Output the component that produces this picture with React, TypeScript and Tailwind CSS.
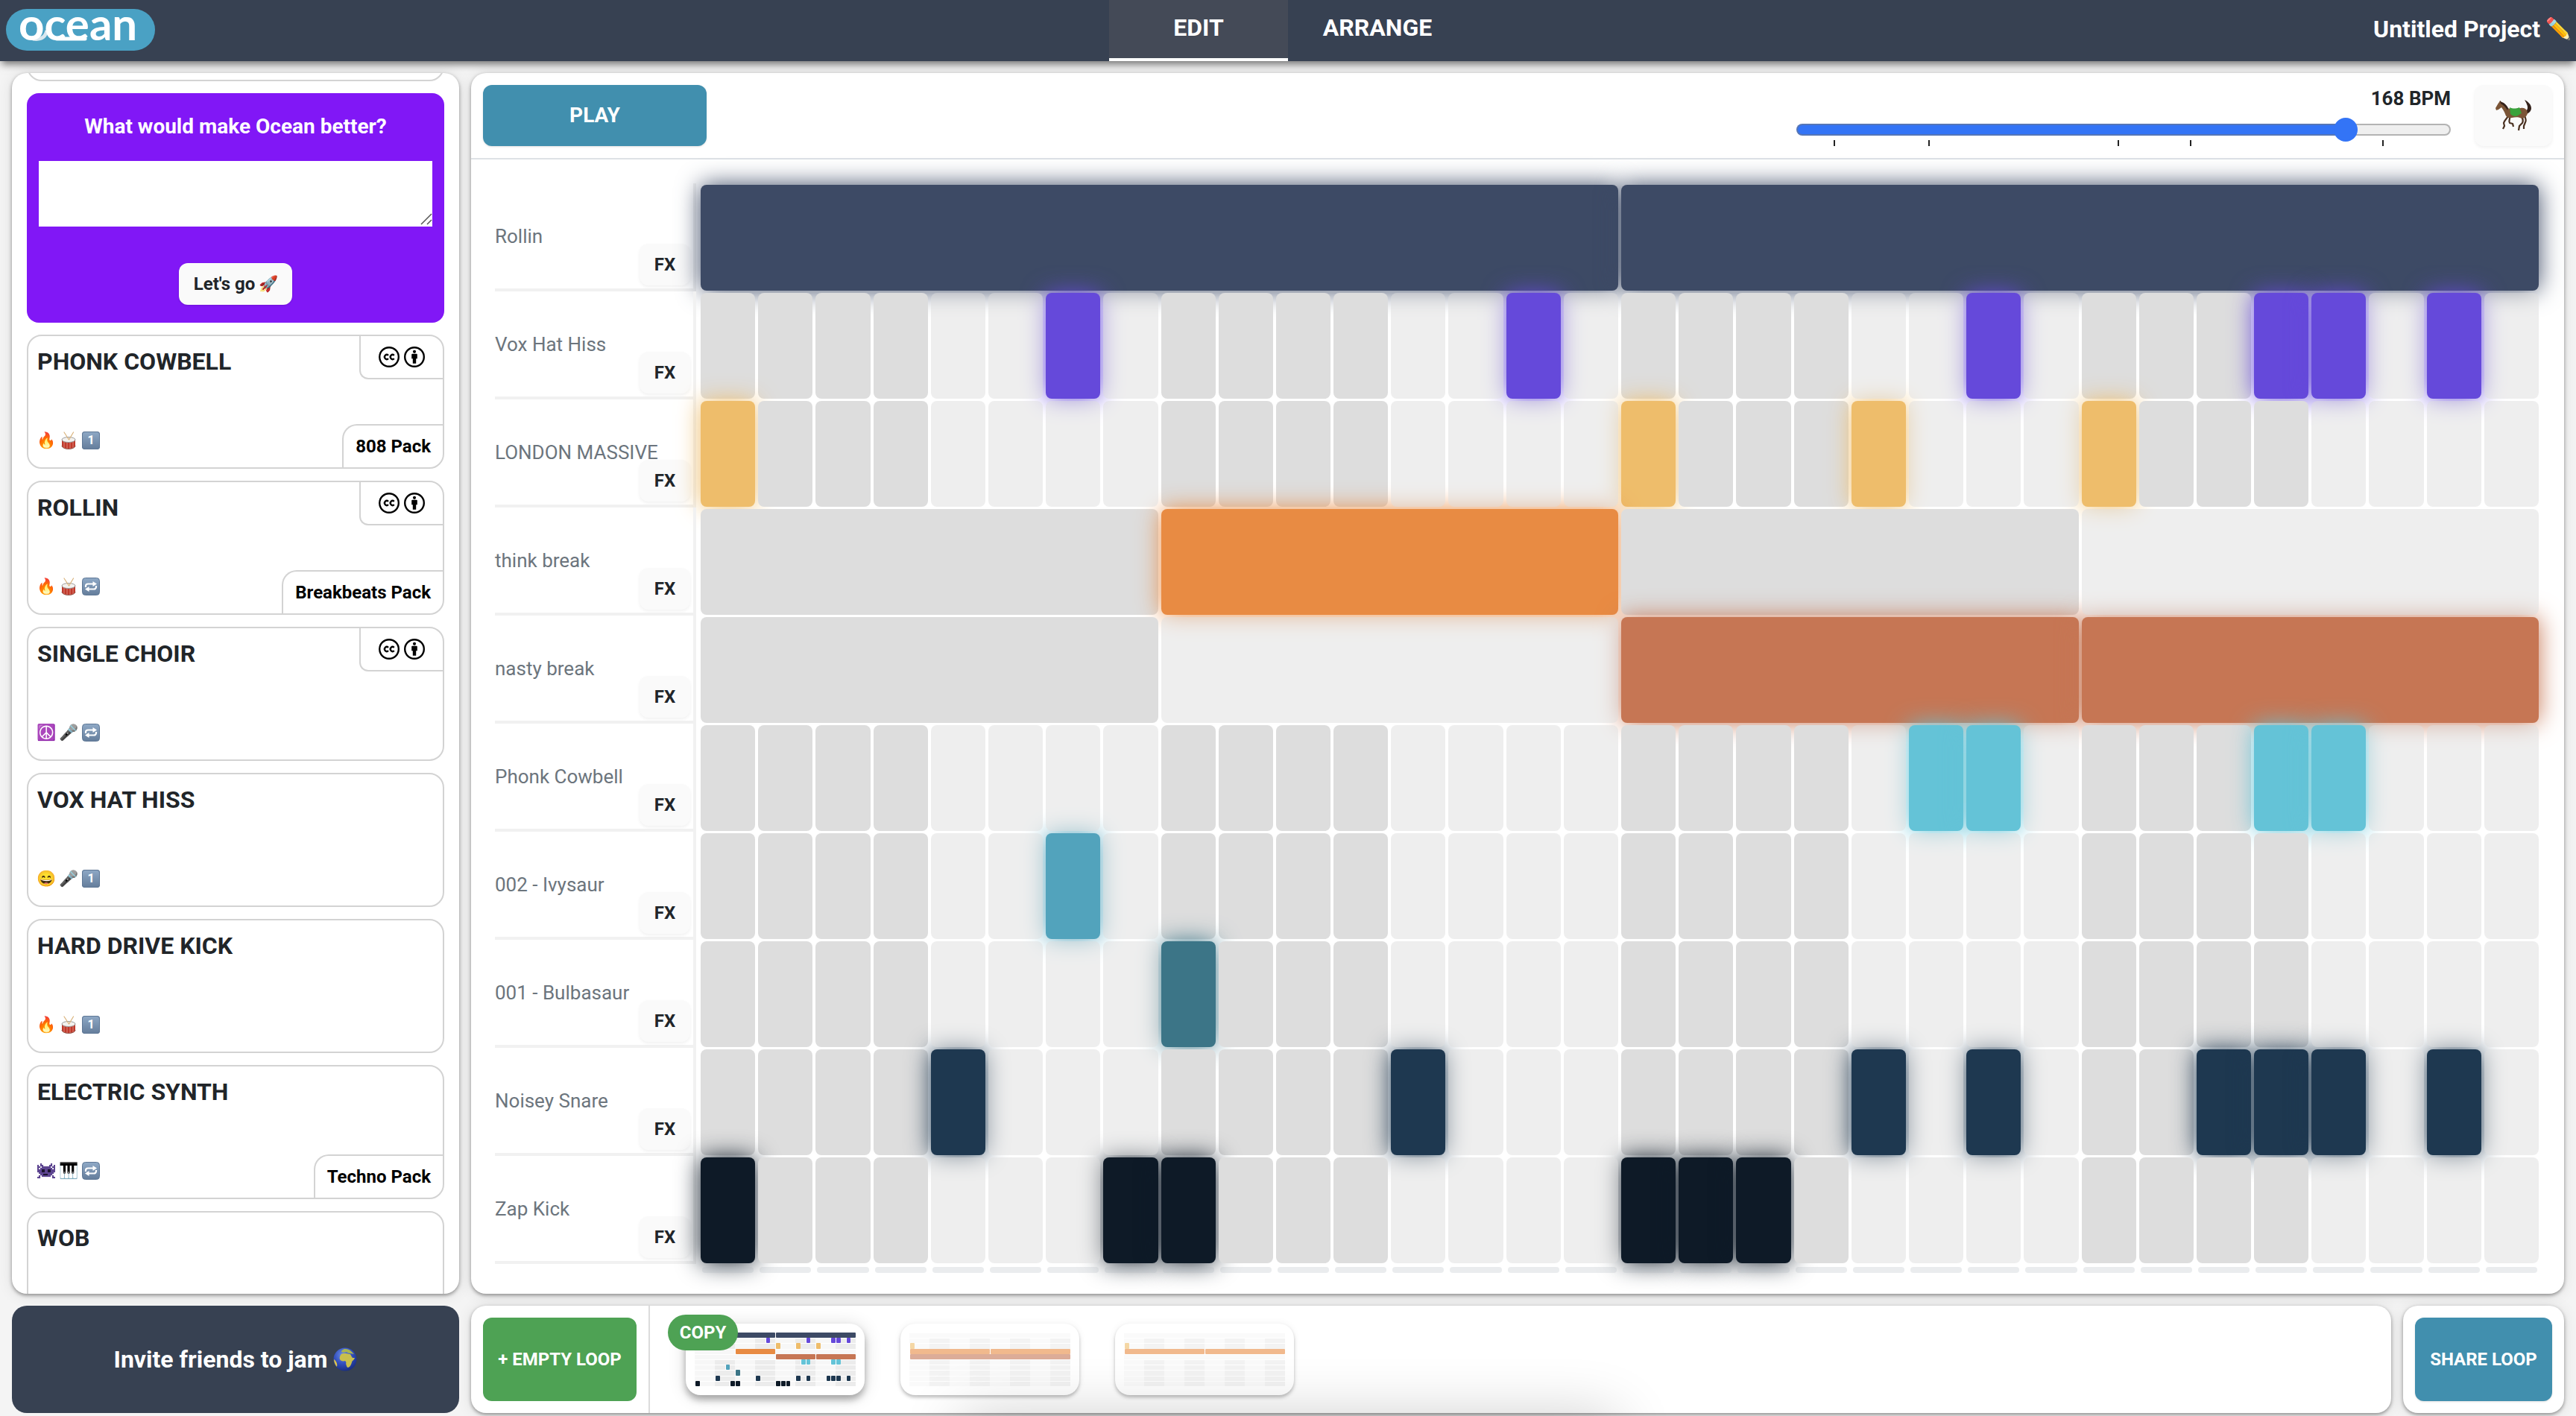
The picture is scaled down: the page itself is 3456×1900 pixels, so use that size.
import { useState, type ReactNode } from 'react';

type Segment = { span: number; on: boolean };
type Track = { name: string; fill: string; glow: string; segments: Segment[] };

const steps = (...active: number[]): Segment[] =>
  Array.from({ length: 32 }, (_, i) => ({ span: 1, on: active.includes(i) }));

const blocks = (span: number, pattern: string): Segment[] =>
  pattern.split('').map((c) => ({ span, on: c === 'x' }));

const TRACKS: Track[] = [
  { name: 'Rollin', fill: 'bg-[#3d4a65]', glow: 'shadow-[0_0_32px_#3d4a65]', segments: blocks(16, 'xx') },
  { name: 'Vox Hat Hiss', fill: 'bg-[#6549da]', glow: 'shadow-[0_0_32px_#6549da]', segments: steps(6, 14, 22, 27, 28, 30) },
  { name: 'LONDON MASSIVE', fill: 'bg-[#eebd6b]', glow: 'shadow-[0_0_32px_#eebd6b]', segments: steps(0, 16, 20, 24) },
  { name: 'think break', fill: 'bg-[#e88b43]', glow: 'shadow-[0_0_32px_#e88b43]', segments: blocks(8, '.x..') },
  { name: 'nasty break', fill: 'bg-[#c67654]', glow: 'shadow-[0_0_32px_#c67654]', segments: blocks(8, '..xx') },
  { name: 'Phonk Cowbell', fill: 'bg-[#64c3d7]', glow: 'shadow-[0_0_32px_#64c3d7]', segments: steps(21, 22, 27, 28) },
  { name: '002 - Ivysaur', fill: 'bg-[#52a3bc]', glow: 'shadow-[0_0_32px_#52a3bc]', segments: steps(6) },
  { name: '001 - Bulbasaur', fill: 'bg-[#3c7587]', glow: 'shadow-[0_0_32px_#3c7587]', segments: steps(8) },
  { name: 'Noisey Snare', fill: 'bg-[#1e3850]', glow: 'shadow-[0_0_32px_#1e3850]', segments: steps(4, 12, 20, 22, 26, 27, 28, 30) },
  { name: 'Zap Kick', fill: 'bg-[#0e1a27]', glow: 'shadow-[0_0_32px_#0e1a27]', segments: steps(0, 7, 8, 16, 17, 18) },
];

const LOOPS: Segment[][][] = [
  TRACKS.map((t) => t.segments),
  [blocks(8, '....'), steps(), steps(0), blocks(16, 'xx'), blocks(32, 'x'), steps(), steps(), steps(), steps(), steps()],
  [blocks(8, '....'), steps(), steps(0), blocks(16, 'xx'), blocks(8, '....'), steps(), steps(), steps(), steps(), steps()],
];

const SPAN: Record<number, string> = {
  1: 'col-span-1',
  8: 'col-span-8',
  16: 'col-span-16',
  32: 'col-span-32',
};

const PANEL =
  'rounded-[20px] bg-white shadow-[0_2px_5px_rgba(0,0,0,0.4),0_2px_20px_rgba(0,0,0,0.1)]';

/* ---------- Icons ---------- */

function Emoji({ children }: { children: string }) {
  return (
    <span className="flex size-6 items-center justify-center overflow-visible text-[21px] leading-6">
      {children}
    </span>
  );
}

function OneIcon() {
  return (
    <span className="flex size-6 items-center justify-center rounded-[4px] bg-linear-to-b from-[#8fa9c6] to-[#647d9b] text-[16px] leading-6 font-bold text-white ring-1 ring-[#5f7896] ring-inset">
      1
    </span>
  );
}

function RepeatIcon() {
  return (
    <svg viewBox="0 0 24 24" className="size-6" role="img" aria-label="Loop">
      <defs>
        <linearGradient id="repeat-bg" x1="0" y1="0" x2="0" y2="1">
          <stop offset="0" stopColor="#8fa9c6" />
          <stop offset="1" stopColor="#647d9b" />
        </linearGradient>
      </defs>
      <rect x="0.5" y="0.5" width="23" height="23" rx="4" fill="url(#repeat-bg)" stroke="#5f7896" />
      <path d="M5 13v-1.5a3 3 0 0 1 3-3h7" fill="none" stroke="#fff" strokeWidth="2.2" />
      <path d="M14.5 5l5.5 3.5-5.5 3.5z" fill="#fff" />
      <path d="M19 11v1.5a3 3 0 0 1-3 3H9" fill="none" stroke="#fff" strokeWidth="2.2" />
      <path d="M9.5 12L4 15.5 9.5 19z" fill="#fff" />
    </svg>
  );
}

function DrumIcon() {
  return (
    <svg viewBox="0 0 24 24" className="size-6" role="img" aria-label="Drums">
      <path d="M3 11v8c0 2.6 4 4.500 9 4.500s9-1.900 9-4.500v-8z" fill="#c0392b" />
      <path d="M3 19c0 2.600 4 4.400 9 4.400s9-1.800 9-4.400" fill="none" stroke="#8e5a50" strokeWidth="1" />
      <path d="M6 14v8M10 15v8M14 15v8M18 14v8" stroke="#e9a89c" strokeWidth="0.7" />
      <ellipse cx="12" cy="11" rx="9" ry="3.500" fill="#f3f1ee" stroke="#9a9a9a" strokeWidth="1" />
      <path d="M6 1l6.500 10M18.500 1l-6 10" stroke="#d9b27a" strokeWidth="1.200" strokeLinecap="round" />
    </svg>
  );
}

const INVADER = [
  '..X......X..',
  'X.XX....XX.X',
  'XX.XXXXXX.XX',
  'X.XXXXXXXX.X',
  'XXXooXXooXXX',
  'XXXooXXooXXX',
  '.XXXXXXXXXX.',
  '..XXoooXXX..',
  '.X.XXXXXX.X.',
  'XX........XX',
];

function InvaderIcon() {
  return (
    <svg viewBox="0 0 12 12" className="size-6" role="img" aria-label="Electronic">
      {INVADER.flatMap((row, y) =>
        row.split('').map((c, x) =>
          c === '.' ? null : (
            <rect key={`${x}-${y}`} x={x} y={y + 1} width="1.05" height="1.05" fill={c === 'X' ? '#5d4590' : '#1c1430'} />
          ),
        ),
      )}
    </svg>
  );
}

function GlobeIcon() {
  return (
    <svg viewBox="0 0 32 32" className="size-8" role="img" aria-label="World">
      <defs>
        <radialGradient id="globe-sea" cx="0.4" cy="0.3" r="0.75">
          <stop offset="0" stopColor="#6d8fe6" />
          <stop offset="0.5" stopColor="#3350c0" />
          <stop offset="1" stopColor="#162a7c" />
        </radialGradient>
      </defs>
      <circle cx="16" cy="16" r="15.5" fill="url(#globe-sea)" />
      <path
        d="M10 10c1-2 4-2 6-2 3 0 4 1 7 1 1 2 2 4 3 5h3c-1 3-4 4-4 6-1 3-2 6-5 7-2 0-2-3-3-5 1-2 0-3-1-4-3 1-6 0-7-2-1-2 0-4 1-6z"
        fill="#c9bf4c"
      />
      <path d="M11 6c0-2 3-4 5-4 3 0 6 1 8 3l4 4c-2 0-3-1-5-1s-4-1-5-2c-3 1-5 1-7 0z" fill="#a9b551" />
      <path d="M1 16c3 2 5 6 4 10-2-2-4-6-4-10z" fill="#e0c648" />
    </svg>
  );
}

function HorseIcon() {
  return (
    <svg viewBox="0 0 48 44" className="h-[44px] w-12" role="img" aria-label="Gallop">
      <path d="M40 17c3-2 4-6 2-10-1-3-2-4-3-6 4 2 9 6 9 11 0 4-3 7-7 8z" fill="#33211a" />
      <path
        d="M17 22c-1 4-5 6-6 10l1 4-2 4M19 23c1 4-2 6 0 9l4 1 1 4"
        fill="none"
        stroke="#4a3020"
        strokeWidth="2.2"
        strokeLinejoin="round"
      />
      <path
        d="M34 21c2 4 4 7 2 11l-4 4-1 6M38 20c2 5 4 8 2 11l-2 5v4"
        fill="none"
        stroke="#4a3020"
        strokeWidth="2.2"
        strokeLinejoin="round"
      />
      <path
        d="M1 15l-1-3c2-3 3-6 5-8l1-2 2 2c4 1 6 4 8 8 6 2 12 1 18 0 5-1 9 2 9 7-1 4-4 7-8 7-3-2-8-2-13-1-5 1-8-1-9-5-1-3-3-6-5-9l-4 3z"
        fill="#7b5537"
      />
      <path d="M6 2l2 2c4 1 7 4 9 8l-1 3C14 11 11 8 7 6z" fill="#33211a" />
      <path d="M19 11c4 2 9 2 13 0l3 8c-3 1-5 4-8 4-3 0-5-1-7-3z" fill="#3aa23c" />
    </svg>
  );
}

function CreativeCommonsIcons() {
  return (
    <>
      <svg viewBox="0 0 28 28" className="size-7" role="img" aria-label="Creative Commons">
        <circle cx="14" cy="14" r="12.8" fill="#fff" stroke="#000" strokeWidth="2.4" />
        <path
          d="M13 11.8a3 3 0 1 0 0 4.4M20.8 11.8a3 3 0 1 0 0 4.4"
          fill="none"
          stroke="#000"
          strokeWidth="2.3"
        />
      </svg>
      <svg viewBox="0 0 28 28" className="size-7" role="img" aria-label="Attribution">
        <circle cx="14" cy="14" r="12.8" fill="#fff" stroke="#000" strokeWidth="2.4" />
        <circle cx="14" cy="6.8" r="2.1" />
        <path d="M11.2 9.8h5.6a1 1 0 0 1 1 1v5.4h-1.6v6.6h-4.4v-6.6h-1.6v-5.4a1 1 0 0 1 1-1z" />
      </svg>
    </>
  );
}

function Logo() {
  return (
    <svg viewBox="0 0 200 56" className="h-14 w-[200px] overflow-visible" role="img" aria-label="ocean">
      <rect width="200" height="56" rx="28" fill="#4aa1c4" />
      <path d="M36 40c12 2 17-3 19-11" fill="none" stroke="#d9e7ee" strokeWidth="5" />
      <text x="17" y="42" fill="#fff" fontFamily="Lato" fontWeight="700" fontSize="60">
        ocean
      </text>
      <path d="M68 40h38" fill="none" stroke="#fff" strokeWidth="5" strokeLinecap="round" />
    </svg>
  );
}

/* ---------- Sidebar ---------- */

type Sample = { title: string; tags: ReactNode; cc?: boolean; pack?: string };

const SAMPLES: Sample[] = [
  { title: 'PHONK COWBELL', cc: true, pack: '808 Pack', tags: <><Emoji>🔥</Emoji><DrumIcon /><OneIcon /></> },
  { title: 'ROLLIN', cc: true, pack: 'Breakbeats Pack', tags: <><Emoji>🔥</Emoji><DrumIcon /><RepeatIcon /></> },
  { title: 'SINGLE CHOIR', cc: true, tags: <><Emoji>☮️</Emoji><Emoji>🎤</Emoji><RepeatIcon /></> },
  { title: 'VOX HAT HISS', tags: <><Emoji>😄</Emoji><Emoji>🎤</Emoji><OneIcon /></> },
  { title: 'HARD DRIVE KICK', tags: <><Emoji>🔥</Emoji><DrumIcon /><OneIcon /></> },
  { title: 'ELECTRIC SYNTH', pack: 'Techno Pack', tags: <><InvaderIcon /><Emoji>🎹</Emoji><RepeatIcon /></> },
  { title: 'WOB', tags: null },
];

function SampleCard({ title, tags, cc, pack }: Sample) {
  return (
    <article className="flex h-[180px] shrink-0 flex-col justify-between overflow-hidden rounded-[20px] border-2 border-[#d3d3d3]">
      <div className="flex items-start justify-between">
        <h3 className="pt-3.5 pl-3 text-[32px] leading-10 font-bold text-[#212529]">{title}</h3>
        {cc && (
          <div className="flex h-[58px] w-[112px] items-center justify-center gap-1.5 rounded-bl-xl border-b-2 border-l-2 border-[#d3d3d3]">
            <CreativeCommonsIcons />
          </div>
        )}
      </div>
      <div className="flex h-[58px] justify-between">
        <div className="flex items-start gap-1.5 pt-2.5 pl-3">{tags}</div>
        {pack && (
          <div className="flex items-center rounded-tl-[20px] border-t-2 border-l-2 border-[#d3d3d3] px-4 text-[24px] font-bold text-black">
            {pack}
          </div>
        )}
      </div>
    </article>
  );
}

function Sidebar() {
  return (
    <aside className={`flex min-h-0 flex-1 flex-col gap-4 overflow-hidden px-5 ${PANEL}`}>
      <div className="-mt-[169px] h-[180px] shrink-0 rounded-[20px] border-2 border-[#d3d3d3]" />
      <form
        className="flex shrink-0 flex-col items-center rounded-2xl bg-[#8117f6] px-4 py-6"
        onSubmit={(e) => e.preventDefault()}
      >
        <label htmlFor="feedback" className="text-[28px] leading-[42px] font-bold text-white">
          What would make Ocean better?
        </label>
        <div className="relative mt-[25px] w-full">
          <textarea id="feedback" className="block h-[88px] w-full resize-none bg-white p-2 text-[24px] outline-none" />
          <svg viewBox="0 0 16 16" className="pointer-events-none absolute right-0 bottom-0.5 size-4" aria-hidden="true">
            <path d="M1 15L15 1M9 15l6-6" stroke="#555" strokeWidth="1.5" fill="none" />
          </svg>
        </div>
        <button
          type="submit"
          className="mt-[49px] flex h-14 items-center gap-1.5 rounded-xl bg-[#fafafa] px-5 text-[24px] font-bold text-[#212529] shadow-sm"
        >
          Let's go <Emoji>🚀</Emoji>
        </button>
      </form>
      {SAMPLES.map((s) => (
        <SampleCard key={s.title} {...s} />
      ))}
    </aside>
  );
}

/* ---------- Sequencer ---------- */

const TICKS = ['left-[4%]', 'left-[19%]', 'left-[49%]', 'left-[60.5%]', 'left-[91%]'];

function Tempo() {
  const [bpm, setBpm] = useState(168);
  const fill = ((bpm - 40) / 150) * 100;
  return (
    <div className="flex w-[878px] flex-col">
      <label htmlFor="bpm" className="self-end text-[26px] leading-9 font-bold text-[#212529]">
        {bpm} BPM
      </label>
      <input
        id="bpm"
        type="range"
        min={40}
        max={190}
        value={bpm}
        onChange={(e) => setBpm(Number(e.target.value))}
        style={{ backgroundImage: `linear-gradient(to right, #3374f6 ${fill}%, #efefef ${fill}%)` }}
        className="my-4 h-4 w-full appearance-none rounded-full border-2 border-[#787878]/50 bg-origin-border outline-none [&::-webkit-slider-thumb]:size-8 [&::-webkit-slider-thumb]:appearance-none [&::-webkit-slider-thumb]:rounded-full [&::-webkit-slider-thumb]:bg-[#3374f6]"
      />
      <div className="relative mx-4 -mt-2.5 h-2" aria-hidden="true">
        {TICKS.map((t) => (
          <span key={t} className={`absolute h-2 w-0.5 bg-[#222] ${t}`} />
        ))}
      </div>
    </div>
  );
}

function TrackRow({ track }: { track: Track }) {
  let position = 0;
  return (
    <div className="flex min-h-0 flex-1">
      <div className="mr-1.5 grid w-[270px] shrink-0 border-r-4 border-b-4 border-[#f1f1f1]">
        <span className="self-center text-[26px] leading-9 whitespace-nowrap text-[#6c757d] [grid-area:1/1]">
          {track.name}
        </span>
        <button
          type="button"
          aria-label={`${track.name} effects`}
          className="m-1 h-14 w-[68px] self-end justify-self-end rounded-xl bg-[#fafafa] text-[24px] font-bold text-[#212529] shadow-[0_2px_4px_rgba(0,0,0,0.06)] [grid-area:1/1]"
        >
          FX
        </button>
      </div>
      <div className="mr-0.5 grid flex-1 grid-cols-32 gap-1 pt-0.5 pb-px">
        {track.segments.map((seg) => {
          const start = position;
          position += seg.span;
          const group = seg.span === 1 ? 4 : seg.span;
          const dim = Math.floor(start / group) % 2 === 1;
          const look = seg.on ? `${track.fill} ${track.glow}` : dim ? 'bg-[#dddddd] opacity-50' : 'bg-[#dddddd]';
          return (
            <button
              key={start}
              type="button"
              aria-pressed={seg.on}
              aria-label={`${track.name} step ${start + 1}`}
              className={`rounded-lg ${SPAN[seg.span]} ${look}`}
            />
          );
        })}
      </div>
    </div>
  );
}

function Sequencer() {
  return (
    <section className={`flex min-h-0 flex-1 flex-col ${PANEL}`}>
      <div className="flex h-[116px] shrink-0 items-stretch border-b-2 border-[#dee2e6] p-4">
        <button type="button" className="w-[300px] rounded-xl bg-[#418fae] text-[28px] font-bold text-white shadow-sm">
          PLAY
        </button>
        <div className="flex-1" />
        <Tempo />
        <button
          type="button"
          aria-label="Double time"
          className="ml-8 flex w-[104px] items-center justify-center rounded-xl bg-[#fafafa] shadow-[0_2px_4px_rgba(0,0,0,0.06)]"
        >
          <HorseIcon />
        </button>
      </div>
      <div className="flex min-h-0 flex-1 flex-col px-8 pt-8 pb-7">
        {TRACKS.map((t) => (
          <TrackRow key={t.name} track={t} />
        ))}
        <div className="mt-1 mr-0.5 ml-[276px] grid h-2 shrink-0 grid-cols-32 gap-1">
          {Array.from({ length: 32 }, (_, i) => (
            <span key={i} className="mx-0.5 rounded-sm bg-[#adb5bd] opacity-25" />
          ))}
        </div>
      </div>
    </section>
  );
}

/* ---------- Loop bar ---------- */

function LoopThumb({ loop, index }: { loop: Segment[][]; index: number }) {
  const active = index === 0;
  return (
    <div className="relative">
      <button
        type="button"
        aria-label={`Loop ${index + 1}`}
        className={
          active
            ? 'flex h-24 w-[240px] flex-col rounded-[20px] bg-white p-3 shadow-[0_6px_10px_rgba(0,0,0,0.3),0_2px_24px_rgba(0,0,0,0.14)]'
            : 'flex h-24 w-[240px] flex-col rounded-[20px] bg-white p-3 opacity-60 shadow-[0_3px_4px_rgba(0,0,0,0.4),0_0_10px_rgba(0,0,0,0.08)]'
        }
      >
        {loop.map((segments, row) => {
          let position = 0;
          return (
            <span key={row} className="grid w-full flex-1 grid-cols-32">
              {segments.map((seg) => {
                const start = position;
                position += seg.span;
                const dark = seg.span === 1 && Math.floor(start / 4) % 2 === 1;
                const look = seg.on
                  ? `${TRACKS[row].fill} ml-px rounded-[1px]`
                  : dark
                    ? 'mt-px bg-[#ececec]'
                    : 'mt-px bg-[#f7f7f7]';
                return <span key={start} className={`${SPAN[seg.span]} ${look}`} />;
              })}
            </span>
          );
        })}
      </button>
      {active && (
        <button
          type="button"
          className="absolute -top-3 -left-6 h-12 w-[94px] rounded-full bg-[#4ea254] text-[24px] font-bold text-white"
        >
          COPY
        </button>
      )}
    </div>
  );
}

function LoopBar() {
  return (
    <div className="flex h-36 shrink-0 gap-4">
      <div className={`flex min-w-0 flex-1 ${PANEL}`}>
        <div className="border-r-2 border-[#dcdcdc] p-4">
          <button type="button" className="h-full w-[206px] rounded-xl bg-[#4ea254] text-[24px] font-bold text-white">
            + EMPTY LOOP
          </button>
        </div>
        <div className="flex items-center gap-12 px-12">
          {LOOPS.map((loop, i) => (
            <LoopThumb key={i} loop={loop} index={i} />
          ))}
        </div>
      </div>
      <div className={`p-4 ${PANEL}`}>
        <button type="button" className="h-full w-[184px] rounded-xl bg-[#418fae] text-[24px] font-bold text-white shadow-sm">
          SHARE LOOP
        </button>
      </div>
    </div>
  );
}

export default function App() {
  return (
    <div className="relative flex h-screen flex-col overflow-hidden bg-[#f4f4f4] font-['Roboto',sans-serif]">
      <header className="relative grid h-[82px] shrink-0 grid-cols-[1fr_auto_1fr] bg-[#374152] text-[32px] font-bold text-white shadow-[0_6px_10px_-2px_rgba(0,0,0,0.55)]">
        <a href="#home" className="mt-3 ml-2 justify-self-start">
          <Logo />
        </a>
        <nav className="flex">
          <a href="#edit" className="flex w-[240px] items-center justify-center border-b-4 border-white bg-[#444a57] pb-1">
            EDIT
          </a>
          <a href="#arrange" className="flex w-[240px] items-center justify-center border-b-4 border-transparent pb-1">
            ARRANGE
          </a>
        </nav>
        <button type="button" className="flex items-center gap-2 justify-self-end pr-2 pb-1">
          Untitled Project
          <span className="flex w-8 justify-center text-[28px]">✏️</span>
        </button>
      </header>
      <main className="flex min-h-0 flex-1 gap-4 px-4 pt-4 pb-1">
        <div className="flex w-[600px] shrink-0 flex-col gap-4">
          <Sidebar />
          <button
            type="button"
            className="flex h-36 shrink-0 items-center justify-center gap-2 rounded-[20px] bg-[#374152] text-[32px] font-bold text-white"
          >
            Invite friends to jam
            <GlobeIcon />
          </button>
        </div>
        <div className="flex min-w-0 flex-1 flex-col gap-4">
          <Sequencer />
          <LoopBar />
        </div>
      </main>
      <div className="pointer-events-none absolute top-full left-1/2 h-20 w-[880px] -translate-x-1/2 shadow-[0_0_80px_rgba(0,0,0,0.2)]" />
    </div>
  );
}
